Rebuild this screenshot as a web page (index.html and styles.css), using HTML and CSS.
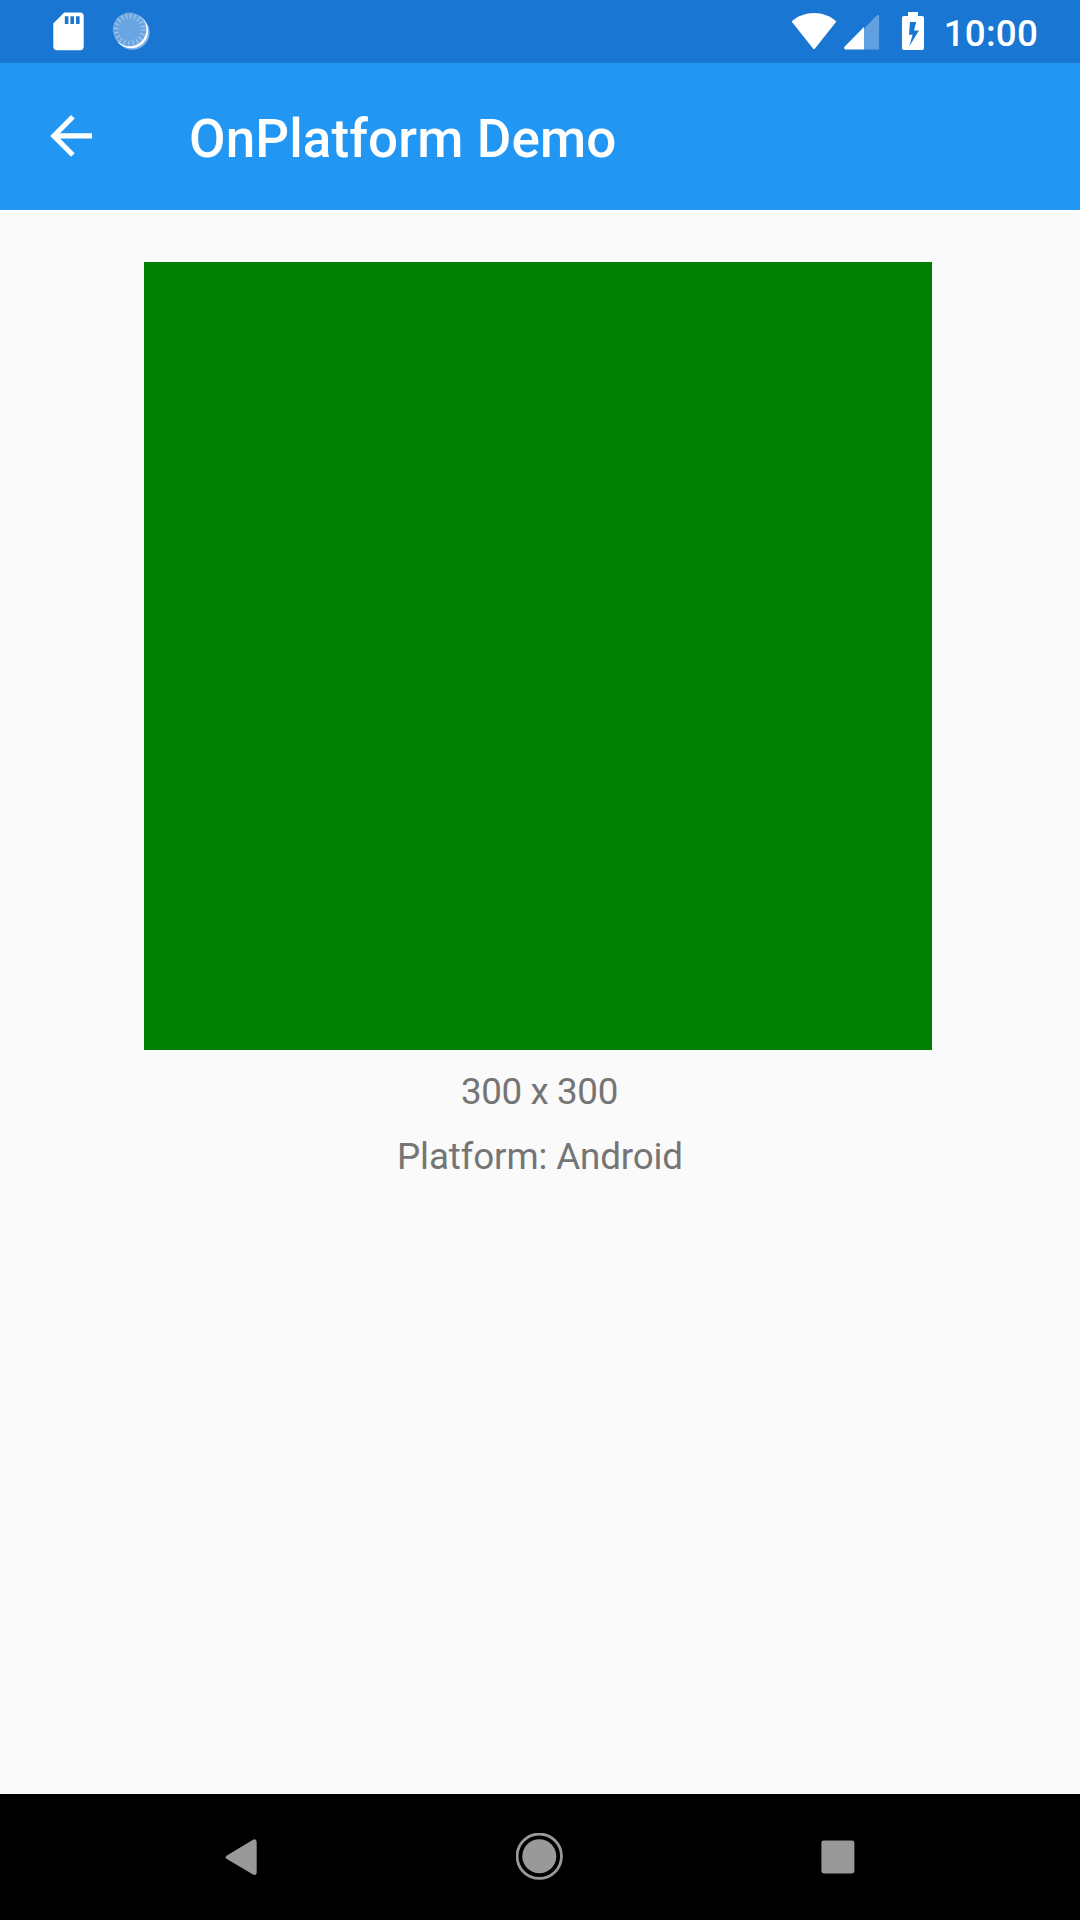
FILE: index.html
```html
<!DOCTYPE html>
<html lang="en">
<head>
<meta charset="utf-8">
<title>OnPlatform Demo</title>
<link rel="stylesheet" href="styles.css">
</head>
<body>
<div class="screen">
  <header class="status-bar">
    <div class="status-group">
      <svg class="icon-sd" viewBox="0 0 32 40" aria-hidden="true">
        <path fill="#fff" fill-rule="evenodd" d="M12.2 1.5H28A3.7 3.7 0 0 1 31.7 5.2V35.6A3.7 3.7 0 0 1 28 39.3H5A3.7 3.7 0 0 1 1.3 35.6V12.6ZM12.8 5.2V13H16.4V5.2ZM18.4 5.2V13H22V5.2ZM24 5.2V13H27.6V5.2Z"/>
      </svg>
      <svg class="icon-spinner" viewBox="0 0 40 40" aria-hidden="true">
        <circle cx="22.4" cy="22.6" r="17.2" fill="#7fb1e7"/>
        <circle cx="21" cy="21" r="17.2" fill="#fff"/>
        <circle cx="19.6" cy="19.4" r="16.8" fill="#69a5e3"/>
        <circle cx="19.6" cy="19.4" r="13.6" fill="none" stroke="#99c2ed" stroke-width="5" stroke-dasharray="1.4 2.873"/>
      </svg>
    </div>
    <div class="status-group">
      <svg class="icon-wifi" viewBox="0 0 46 38" aria-hidden="true">
        <path fill="#fff" d="M0.6 9.6C13-1.8 33-1.8 45.4 9.6L24 36.4Q23 37.4 22 36.4Z"/>
      </svg>
      <svg class="icon-signal" viewBox="0 0 36 36" aria-hidden="true">
        <path fill="#61a1e1" d="M20 14.5 33 1.3Q34.3 .2 35.1 1.7V34.2Q35.1 35.5 33.8 35.5H20Z"/>
        <path fill="#fff" d="M20 13V35.5H1.4Q-.6 35 .5 32.7Z"/>
      </svg>
      <svg class="icon-battery" viewBox="0 0 22 38" aria-hidden="true">
        <path fill="#fff" fill-rule="evenodd" d="M6 0H16V4H20.2Q22 4 22 5.8V36.2Q22 38 20.2 38H1.8Q0 38 0 36.2V5.8Q0 4 1.8 4H6ZM8 10 7 22.7H10.6L7.3 34.3 17 18.6H12L14.2 10Z"/>
      </svg>
      <span class="clock">10:00</span>
    </div>
  </header>
  <div class="app-bar">
    <svg class="icon-back" viewBox="0 0 42 42" aria-hidden="true">
      <path fill="#fff" d="M42 18.2V23.4H10.1L24.7 38.2 21 41.8.2 20.9 21 0 24.7 3.6 10.1 18.2Z"/>
    </svg>
    <h1 class="title">OnPlatform Demo</h1>
  </div>
  <main class="content">
    <div class="box"></div>
    <p class="label label-size">300 x 300</p>
    <p class="label">Platform: Android</p>
  </main>
  <nav class="nav-bar">
    <svg class="nav-icon" viewBox="0 0 48 48" aria-hidden="true">
      <path fill="#999" d="M9.9 22.4 36 6.7Q39.5 5.4 39.7 9V39.4Q39.5 43 36 41.6L9.9 26Q7.5 24.2 9.9 22.4Z"/>
    </svg>
    <svg class="nav-icon" viewBox="0 0 48 48" aria-hidden="true">
      <circle cx="23.3" cy="23.2" r="22.2" fill="none" stroke="#999" stroke-width="2.8"/>
      <circle cx="23.3" cy="23.2" r="17" fill="#999"/>
    </svg>
    <svg class="nav-icon" viewBox="0 0 48 48" aria-hidden="true">
      <rect x="6.4" y="7.4" width="33" height="33" rx="2.4" fill="#999"/>
    </svg>
  </nav>
</div>
</body>
</html>
```
FILE: styles.css
```css
body {
  margin: 0;
  font-family: Roboto, "Liberation Sans", sans-serif;
}

.screen {
  display: flex;
  flex-direction: column;
  width: 1080px;
  height: 1920px;
  background: #fafafa;
}

svg {
  display: block;
  flex: none;
}

.status-bar {
  display: flex;
  justify-content: space-between;
  height: 63px;
  box-sizing: border-box;
  padding: 0 42px 0 52px;
  background: #1976d2;
}

.status-group {
  display: flex;
  align-items: flex-start;
}

.icon-sd {
  width: 32px;
  height: 40px;
  margin-top: 11px;
}

.icon-spinner {
  width: 40px;
  height: 40px;
  margin: 10px 0 0 26px;
}

.icon-wifi {
  width: 46px;
  height: 38px;
  margin-top: 12px;
}

.icon-signal {
  width: 36px;
  height: 36px;
  margin: 14px 0 0 7px;
}

.icon-battery {
  width: 22px;
  height: 38px;
  margin: 12px 20px 0 22px;
}

.clock {
  margin-top: 12px;
  color: #fff;
  font-size: 36.75px;
  font-weight: 500;
  letter-spacing: 0.2px;
  line-height: 43px;
}

.app-bar {
  display: flex;
  align-items: center;
  height: 147px;
  box-sizing: border-box;
  padding-left: 50px;
  background: #2196f3;
}

.icon-back {
  width: 42px;
  height: 42px;
  margin-bottom: 1px;
}

.title {
  margin: 5px 0 0 97px;
  color: #fff;
  font-size: 53px;
  font-weight: 500;
  letter-spacing: 0.12px;
  line-height: 62px;
}

.content {
  display: flex;
  flex: 1;
  flex-direction: column;
  align-items: center;
  gap: 22px;
  padding-top: 52px;
}

.box {
  width: 788px;
  height: 788px;
  margin-right: 4px;
  margin-bottom: -2px;
  background: #008000;
}

.label {
  margin: 0;
  color: #757575;
  font-size: 36.75px;
  letter-spacing: -0.14px;
  line-height: 43px;
}

.label-size {
  margin-right: 1px;
  letter-spacing: -0.4px;
}

.nav-bar {
  display: flex;
  align-items: center;
  justify-content: center;
  gap: 251px;
  height: 126px;
  background: #000;
}

.nav-icon {
  width: 48px;
  height: 48px;
}
```
